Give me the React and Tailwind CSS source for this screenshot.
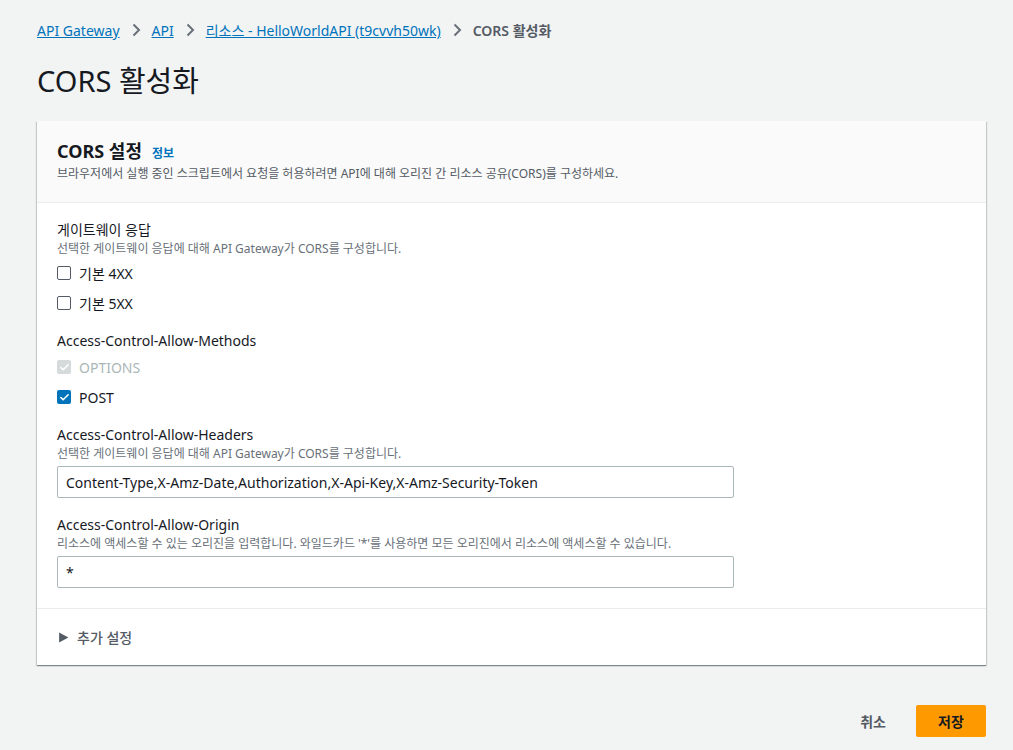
import { Check } from 'lucide-react';

const font = { fontFamily: '"Noto Sans", "Noto Sans CJK KR", sans-serif' };

const Chevron = () => (
    <svg className="w-4 h-4 text-[#687078] mx-[8px]" viewBox="0 0 16 16" fill="none" stroke="currentColor" strokeWidth="2">
        <path d="M5.5 2.5l5.5 5.5-5.5 5.5" />
    </svg>
);

const CheckRow = ({ label, checked = false, disabled = false }) => (
    <label className="flex items-center h-[30px]">
        <span
            className={`w-[14px] h-[14px] rounded-[2px] flex items-center justify-center ${
                checked
                    ? disabled
                        ? 'bg-[#d5dbdb]'
                        : 'bg-[#0073bb]'
                    : 'border border-[#545b64] bg-white'
            }`}
        >
            {checked && <Check className="w-[11px] h-[11px] text-white" strokeWidth={3.5} />}
        </span>
        <span className={`ml-[8px] text-[14px] ${disabled ? 'text-[#aab7b8]' : 'text-[#16191f]'}`}>{label}</span>
    </label>
);

const App = () => {
    return (
        <div className="min-h-[750px] bg-[#f2f3f3] pl-[37px] pr-[27px] pt-[19px]" style={font}>
            {/* Breadcrumbs */}
            <nav className="flex items-center text-[14px] h-[22px]">
                <a className="text-[#0073bb] underline">API Gateway</a>
                <Chevron />
                <a className="text-[#0073bb] underline">API</a>
                <Chevron />
                <a className="text-[#0073bb] underline">리소스 - HelloWorldAPI (t9cvvh50wk)</a>
                <Chevron />
                <span className="text-[#545b64] font-semibold">CORS 활성화</span>
            </nav>

            <h1 className="text-[29px] text-[#16191f] mt-[18px] leading-[44px]">CORS 활성화</h1>

            {/* Card */}
            <div className="mt-[18px] bg-white shadow-[0_1px_1px_0_rgba(0,28,36,0.3),1px_1px_1px_0_rgba(0,28,36,0.15),-1px_1px_1px_0_rgba(0,28,36,0.15)]">
                <div className="bg-[#fafafa] border-b border-[#eaeded] px-[20px] pt-[17px] pb-[19px]">
                    <div className="flex items-baseline">
                        <h2 className="text-[18px] font-bold text-[#16191f] leading-[26px]">CORS 설정</h2>
                        <a className="ml-[10px] text-[12px] font-semibold text-[#0073bb]">정보</a>
                    </div>
                    <p className="text-[12px] text-[#545b64] leading-[18px] mt-[1px]">
                        브라우저에서 실행 중인 스크립트에서 요청을 허용하려면 API에 대해 오리진 간 리소스 공유(CORS)를 구성하세요.
                    </p>
                </div>

                <div className="px-[20px] pt-[16px] pb-[20px] border-b border-[#eaeded]">
                    <div className="text-[14px] text-[#16191f] leading-[22px]">게이트웨이 응답</div>
                    <div className="text-[12px] text-[#687078] leading-[16px]">선택한 게이트웨이 응답에 대해 API Gateway가 CORS를 구성합니다.</div>
                    <div className="mt-[1px]">
                        <CheckRow label="기본 4XX" />
                        <CheckRow label="기본 5XX" />
                    </div>

                    <div className="text-[14px] text-[#16191f] leading-[22px] mt-[12px]">Access-Control-Allow-Methods</div>
                    <div>
                        <CheckRow label="OPTIONS" checked disabled />
                        <CheckRow label="POST" checked />
                    </div>

                    <div className="text-[14px] text-[#16191f] leading-[22px] mt-[12px]">Access-Control-Allow-Headers</div>
                    <div className="text-[12px] text-[#687078] leading-[16px]">선택한 게이트웨이 응답에 대해 API Gateway가 CORS를 구성합니다.</div>
                    <input
                        className="mt-[4px] block w-[677px] h-[32px] border border-[#aab7b8] rounded-[2px] px-[8px] text-[14px] text-[#16191f] outline-none"
                        style={font}
                        defaultValue="Content-Type,X-Amz-Date,Authorization,X-Api-Key,X-Amz-Security-Token"
                    />

                    <div className="text-[14px] text-[#16191f] leading-[22px] mt-[16px]">Access-Control-Allow-Origin</div>
                    <div className="text-[12px] text-[#687078] leading-[16px]">
                        리소스에 액세스할 수 있는 오리진을 입력합니다. 와일드카드 '*'를 사용하면 모든 오리진에서 리소스에 액세스할 수 있습니다.
                    </div>
                    <input
                        className="mt-[4px] block w-[677px] h-[32px] border border-[#aab7b8] rounded-[2px] px-[8px] text-[14px] text-[#16191f] outline-none"
                        style={font}
                        defaultValue="*"
                    />
                </div>

                <div className="px-[20px] h-[56px] flex items-center">
                    <svg className="w-[11px] h-[11px] text-[#545b64] ml-[1px]" viewBox="0 0 10 10" fill="currentColor">
                        <path d="M1 0.5L9.5 5L1 9.5Z" />
                    </svg>
                    <span className="ml-[8px] text-[14px] font-medium text-[#545b64]">추가 설정</span>
                </div>
            </div>

            {/* Actions */}
            <div className="flex justify-end items-center mt-[40px]">
                <button className="text-[14px] font-semibold text-[#545b64] px-[14px] h-[32px]">취소</button>
                <button className="ml-[16px] bg-[#ff9900] text-[14px] font-semibold text-[#16191f] w-[70px] h-[32px] rounded-[2px]">저장</button>
            </div>
        </div>
    );
};

export default App;
